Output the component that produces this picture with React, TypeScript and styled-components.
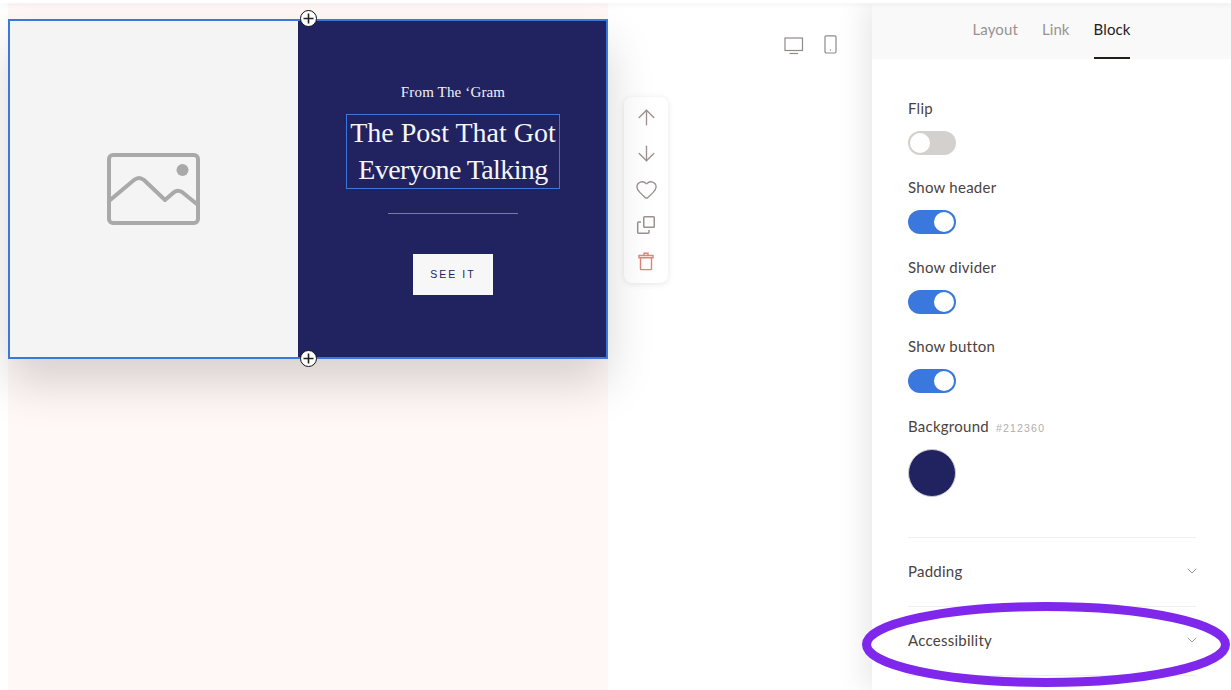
import React from 'react';
import styled, { createGlobalStyle } from 'styled-components';
import { ArrowUp, ArrowDown, Heart, ChevronDown } from 'lucide-react';

const GlobalStyle = createGlobalStyle`
  html, body {
    margin: 0;
    padding: 0;
    background: #fff;
    overflow: hidden;
  }
  * { box-sizing: border-box; }
`;

const Page = styled.div`
  position: relative;
  display: flex;
  width: 1231px;
  height: 690px;
  padding-top: 3px;
  overflow: hidden;
  font-family: 'Lato', 'Liberation Sans', sans-serif;
  &::before {
    content: '';
    position: absolute;
    top: 0;
    left: 0;
    right: 0;
    height: 3px;
    background: #fff;
    box-shadow: 0 1px 6px rgba(0, 0, 0, 0.08);
    z-index: 3;
  }
`;

const Stage = styled.div`
  flex: 1;
  display: flex;
  padding-left: 8px;
  min-width: 0;
`;

const Canvas = styled.div`
  width: 600px;
  height: 687px;
  padding-top: 16px;
  background: #fff8f7;
  flex-shrink: 0;
`;

const Block = styled.div`
  position: relative;
  display: flex;
  height: 340px;
  border: 2px solid #3a78de;
  box-shadow: 0 24px 44px rgba(0, 0, 0, 0.16);
`;

const ImageSide = styled.div`
  width: 288px;
  display: flex;
  align-items: center;
  justify-content: center;
  padding-right: 2px;
  background: #f4f4f4;
`;

const TextSide = styled.div`
  flex: 1;
  display: flex;
  flex-direction: column;
  align-items: center;
  padding: 62px 0 0 2px;
  background: #212360;
  color: #fff;
`;

const Eyebrow = styled.div`
  font-family: 'Liberation Serif', serif;
  font-size: 15px;
  line-height: 18px;
  letter-spacing: 0.15px;
  color: #f2f2f6;
`;

const Heading = styled.h1`
  margin: 13px 0 0;
  padding: 0 3px;
  border: 1px solid #3a78de;
  font-family: 'Liberation Serif', serif;
  font-weight: 400;
  font-size: 28px;
  line-height: 36.5px;
  text-align: center;
  color: #f6f5f9;
`;

const HeadingLine = styled.span<{ $tracking: number }>`
  display: block;
  letter-spacing: ${(p) => p.$tracking}px;
`;

const Rule = styled.div`
  width: 130px;
  height: 1px;
  margin-top: 24px;
  background: rgba(255, 255, 255, 0.4);
`;

const SeeIt = styled.button`
  width: 80px;
  height: 41px;
  margin-top: 40px;
  padding: 0 0 2px;
  border: 0;
  background: #f7f7f8;
  color: #212360;
  font-family: 'Liberation Sans', Arial, sans-serif;
  font-size: 10.5px;
  letter-spacing: 2px;
`;

const AddButton = styled.div<{ $edge: 'top' | 'bottom' }>`
  position: absolute;
  left: 290px;
  ${(p) => (p.$edge === 'top' ? 'top: -11px;' : 'bottom: -10px;')}
  width: 17px;
  height: 17px;
  display: flex;
  align-items: center;
  justify-content: center;
  border: 1.5px solid #111;
  border-radius: 50%;
  background: #fff;
  z-index: 2;
`;

const ActionBar = styled.div`
  width: 44px;
  height: 186px;
  margin: 94px 0 0 16px;
  display: flex;
  flex-direction: column;
  align-items: center;
  padding-top: 2px;
  background: #fff;
  border-radius: 8px;
  box-shadow: 0 1px 6px rgba(0, 0, 0, 0.1);
  flex-shrink: 0;
`;

const ActionSlot = styled.div<{ $danger?: boolean }>`
  width: 36px;
  height: 36px;
  display: flex;
  align-items: center;
  justify-content: center;
  color: ${(p) => (p.$danger ? '#e0837b' : '#9b9392')};
`;

const DeviceBar = styled.div`
  margin: 32px 0 0 116px;
  display: flex;
  gap: 20px;
  align-items: flex-start;
  color: #8f8a89;
`;

const Panel = styled.aside`
  position: relative;
  width: 359px;
  height: 687px;
  flex-shrink: 0;
  background: #fff;
  box-shadow: -6px 0 28px rgba(0, 0, 0, 0.1);
  z-index: 1;
`;

const Tabs = styled.nav`
  height: 56px;
  display: flex;
  justify-content: center;
  gap: 24px;
  background: #f9f9f9;
`;

const Tab = styled.div<{ $active?: boolean }>`
  height: 56px;
  line-height: 52px;
  font-size: 15px;
  letter-spacing: 0.1px;
  color: ${(p) => (p.$active ? '#231d1c' : '#9a9291')};
  border-bottom: 2px solid ${(p) => (p.$active ? '#231d1c' : 'transparent')};
`;

const PanelBody = styled.div`
  padding: 40px 35px 0 36px;
`;

const Field = styled.div`
  display: flex;
  flex-direction: column;
  align-items: flex-start;
  margin-bottom: 23.4px;
`;

const Label = styled.div`
  font-size: 15px;
  line-height: 18px;
  letter-spacing: 0.25px;
  color: #4b4240;
`;

const Hex = styled.span`
  margin-left: 7px;
  font-family: 'Liberation Sans', Arial, sans-serif;
  font-size: 10.5px;
  line-height: 1;
  letter-spacing: 1.2px;
  color: #b3adab;
`;

const Toggle = styled.div<{ $on?: boolean }>`
  width: 48px;
  height: 24px;
  margin-top: 14px;
  padding: 2px;
  display: flex;
  justify-content: ${(p) => (p.$on ? 'flex-end' : 'flex-start')};
  border-radius: 12px;
  background: ${(p) => (p.$on ? '#3a78de' : '#d4d0cd')};
  &::after {
    content: '';
    width: 20px;
    height: 20px;
    border-radius: 50%;
    background: #fff;
  }
`;

const Swatch = styled.div`
  width: 48px;
  height: 48px;
  margin-top: 14px;
  border-radius: 50%;
  background: #212360;
  border: 1px solid #c9c8d4;
`;

const Accordion = styled.div`
  margin-top: 40px;
  border-top: 1px solid #efefef;
`;

const AccordionRow = styled.div`
  height: 69px;
  padding-bottom: 2px;
  display: flex;
  align-items: center;
  justify-content: space-between;
  border-bottom: 1px solid #efefef;
`;

const Chevron = styled(ChevronDown)`
  margin-right: -4px;
  color: #77706e;
`;

const Ring = styled.svg`
  position: absolute;
  left: 858px;
  top: 598px;
  z-index: 4;
`;

const Placeholder = () => (
  <svg width="93" height="72" viewBox="0 0 93 72" fill="none" stroke="#a9a9a9" strokeWidth="4" strokeLinejoin="round" strokeLinecap="round">
    <rect x="2" y="2" width="89" height="68" rx="4" />
    <path d="M2 48 L27 27 Q32 23 37 27 L58 47 L66 40 Q70 36 75 39 L91 52" />
    <circle cx="75.5" cy="17" r="6" fill="#a9a9a9" stroke="none" />
  </svg>
);

const PlusMark = () => (
  <svg width="11" height="11" viewBox="0 0 11 11" stroke="#222" strokeWidth="1.6">
    <path d="M5.5 0.5v10M0.5 5.5h10" />
  </svg>
);

const CopyIcon = () => (
  <svg width="20" height="20" viewBox="0 0 20 20" fill="none" stroke="currentColor" strokeWidth="1.5">
    <rect x="7.75" y="1.75" width="10.5" height="10.5" rx="0.8" />
    <path d="M5 7H2.5a.8.8 0 0 0-.8.8v9.7a.8.8 0 0 0 .8.8h9.7a.8.8 0 0 0 .8-.8V15" />
  </svg>
);

const TrashIcon = () => (
  <svg width="20" height="20" viewBox="0 0 20 20" fill="none" stroke="currentColor" strokeWidth="1.4">
    <path d="M3 4.5h14v2.2H3z" />
    <path d="M4.5 6.7V18a.6.6 0 0 0 .6.6h9.8a.6.6 0 0 0 .6-.6V6.7" />
    <path d="M8 4.5V2.2h4v2.3" />
  </svg>
);

const MonitorIcon = () => (
  <svg width="20" height="18" viewBox="0 0 20 18" fill="none" stroke="currentColor" strokeWidth="1.2" style={{ marginTop: 2 }}>
    <rect x="1" y="1" width="17.5" height="12.5" />
    <path d="M5.5 16.5h8.5" />
  </svg>
);

const PhoneIcon = () => (
  <svg width="13" height="19" viewBox="0 0 13 19" fill="none" stroke="currentColor" strokeWidth="1.2">
    <rect x="1" y="0.8" width="11" height="17.2" rx="1.2" />
    <circle cx="6.5" cy="15" r="0.7" fill="currentColor" stroke="none" />
  </svg>
);

const toggles = [
  { label: 'Flip', on: false },
  { label: 'Show header', on: true },
  { label: 'Show divider', on: true },
  { label: 'Show button', on: true },
];

export default function App() {
  return (
    <Page>
      <GlobalStyle />
      <Stage>
        <Canvas>
          <Block>
            <AddButton $edge="top"><PlusMark /></AddButton>
            <ImageSide><Placeholder /></ImageSide>
            <TextSide>
              <Eyebrow>From The ‘Gram</Eyebrow>
              <Heading>
                <HeadingLine $tracking={0}>The Post That Got</HeadingLine>
                <HeadingLine $tracking={-0.6}>Everyone Talking</HeadingLine>
              </Heading>
              <Rule />
              <SeeIt>SEE IT</SeeIt>
            </TextSide>
            <AddButton $edge="bottom"><PlusMark /></AddButton>
          </Block>
        </Canvas>
        <ActionBar>
          <ActionSlot><ArrowUp size={25} strokeWidth={1.3} /></ActionSlot>
          <ActionSlot><ArrowDown size={25} strokeWidth={1.3} /></ActionSlot>
          <ActionSlot><Heart size={23} strokeWidth={1.4} /></ActionSlot>
          <ActionSlot><CopyIcon /></ActionSlot>
          <ActionSlot $danger><TrashIcon /></ActionSlot>
        </ActionBar>
        <DeviceBar>
          <MonitorIcon />
          <PhoneIcon />
        </DeviceBar>
      </Stage>
      <Panel>
        <Tabs>
          <Tab>Layout</Tab>
          <Tab>Link</Tab>
          <Tab $active>Block</Tab>
        </Tabs>
        <PanelBody>
          {toggles.map((t) => (
            <Field key={t.label}>
              <Label>{t.label}</Label>
              <Toggle $on={t.on} />
            </Field>
          ))}
          <Field>
            <Label>Background<Hex>#212360</Hex></Label>
            <Swatch />
          </Field>
          <Accordion>
            <AccordionRow>
              <Label>Padding</Label>
              <Chevron size={16} strokeWidth={1.1} />
            </AccordionRow>
            <AccordionRow>
              <Label>Accessibility</Label>
              <Chevron size={16} strokeWidth={1.1} />
            </AccordionRow>
          </Accordion>
        </PanelBody>
      </Panel>
      <Ring width="376" height="92" viewBox="0 0 376 92" fill="none">
        <ellipse cx="188" cy="46.5" rx="179.5" ry="38" stroke="#7f27ea" strokeWidth="9" />
      </Ring>
    </Page>
  );
}
